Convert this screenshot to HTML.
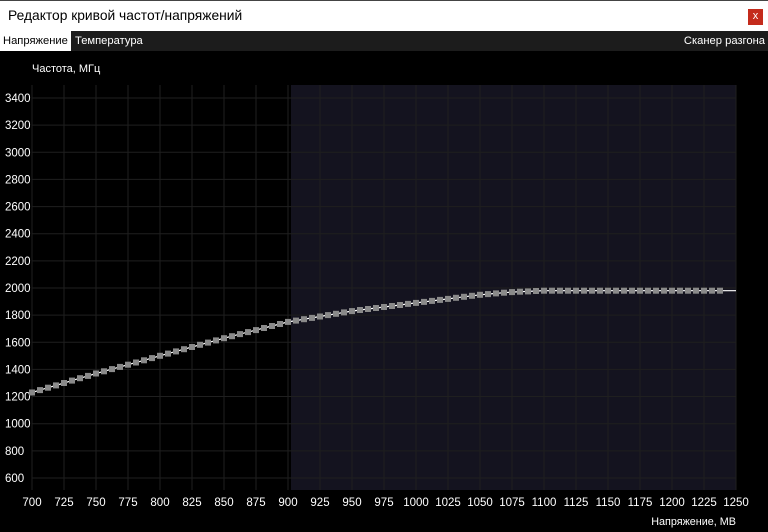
<!DOCTYPE html><html><head><meta charset="utf-8"><style>
body{margin:0;width:768px;height:532px;background:#000;overflow:hidden;font-family:"Liberation Sans",sans-serif;position:relative}
.t{position:absolute;height:31px;left:0;top:0;width:768px;background:#fff;border-top:1px solid #444;box-sizing:border-box}
.t span{position:absolute;left:8px;top:7px;font-size:13.8px;color:#000}
.x{position:absolute;left:748px;top:8px;width:15px;height:16px;background:#c42b1c;color:#fff;font-size:11px;text-align:center;line-height:14px}
.tabs{position:absolute;top:31px;left:0;width:768px;height:20px;background:#1c1c1c;font-size:11.2px;color:#fff}
.tabs div{position:absolute;top:0;height:20px;line-height:20px}
</style></head><body>
<div class="t"><span>Редактор кривой частот/напряжений</span><div class="x">x</div></div>
<div class="tabs"><div style="left:0;width:71px;background:#fff;color:#000;padding-left:3px;box-sizing:border-box">Напряжение</div><div style="left:75px">Температура</div><div style="right:3px">Сканер разгона</div></div>
<svg id="s" width="768" height="481" style="position:absolute;top:51px;left:0" viewBox="0 51 768 481"></svg>
<script>
var s='';
s+='<text x="32" y="72" fill="#fff" font-size="11" font-family="Liberation Sans">Частота, МГц</text>';
s+='<rect x="291" y="85" width="445" height="405" fill="#14131f"/>';
function Y(f){return 98+(3400-f)*0.13571}
for(var x=32;x<=736;x+=32){s+='<line x1="'+x+'" y1="85" x2="'+x+'" y2="490" stroke="#1f1f1f" stroke-width="1"/>';
var v=700+(x-32)/32*25;s+='<text x="'+x+'" y="506" fill="#fff" font-size="11.5" text-anchor="middle" font-family="Liberation Sans">'+v+'</text>';}
for(var f=600;f<=3400;f+=200){var y=Y(f);s+='<line x1="32" y1="'+y+'" x2="736" y2="'+y+'" stroke="#1f1f1f"/>';
s+='<text x="5" y="'+(y+4)+'" fill="#fff" font-size="11.5" font-family="Liberation Sans">'+f+'</text>';}
s+='<text x="736" y="525" fill="#fff" font-size="10.8" text-anchor="end" font-family="Liberation Sans">Напряжение, МВ</text>';
var k=[[700,1230],[750,1370],[800,1500],[850,1630],[900,1750],[950,1830],[1000,1890],[1050,1950],[1075,1970],[1100,1980],[1300,1980]];
function F(v){for(var i=0;i<k.length-1;i++){if(v<=k[i+1][0]){var a=k[i],b=k[i+1];return a[1]+(b[1]-a[1])*(v-a[0])/(b[0]-a[0]);}}return 1980}
var pts=[],r='';
for(var x=32;x<=720;x+=8){var v=700+(x-32)/32*25;var y=Y(F(v));pts.push(x+','+y.toFixed(1));r+='<rect x="'+(x-3)+'" y="'+(y-3).toFixed(1)+'" width="6" height="6" fill="#8a8a8a"/>';}
pts.push('736,'+Y(1980).toFixed(1));
s+='<polyline points="'+pts.join(' ')+'" fill="none" stroke="#fff" stroke-width="1.2"/>'+r;
document.getElementById('s').innerHTML=s;
</script>
</body></html>
